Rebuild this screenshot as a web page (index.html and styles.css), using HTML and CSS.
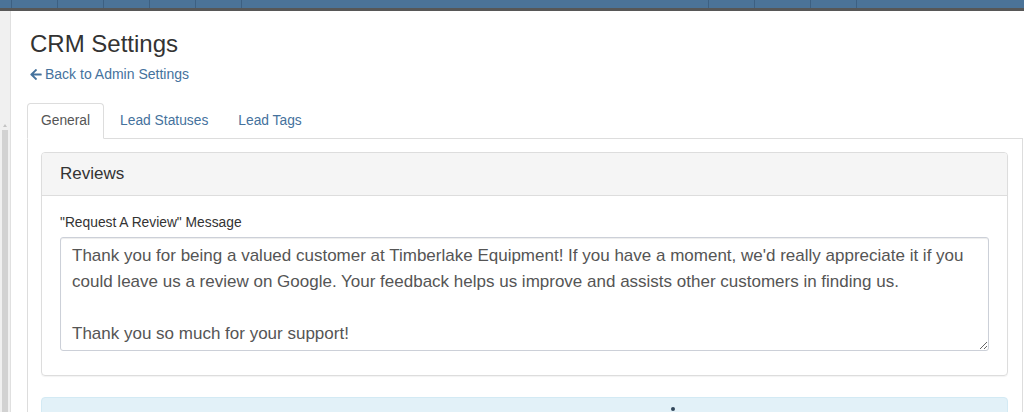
FILE: index.html
```html
<!DOCTYPE html>
<html lang="en">
<head>
    <meta charset="UTF-8">
    <title>CRM Settings</title>
    <link rel="stylesheet" href="styles.css">
</head>
<body>

<div class="topbar">
    <span class="tb-item w11"></span>
    <span class="tb-item"></span>
    <span class="tb-item"></span>
    <span class="tb-item"></span>
    <span class="tb-item"></span>
    <span class="tb-item"></span>
    <span class="tb-fill"></span>
    <span class="tb-item"></span>
    <span class="tb-item w56"></span>
    <span class="tb-item"></span>
    <span class="tb-last"></span>
</div>

<div class="layout">
    <div class="sidebar">
        <div class="sb-arrow"></div>
        <div class="sb-thumb"></div>
    </div>

    <div class="main">
        <div class="page-header">
            <h1>CRM Settings</h1>
            <a href="#" class="back-link">
                <svg class="icon-back" viewBox="0 0 448 512"><path d="M257.5 445.1l-22.2 22.2c-9.4 9.4-24.6 9.4-33.9 0L7 273c-9.4-9.4-9.4-24.6 0-33.9L201.4 44.7c9.4-9.4 24.6-9.4 33.9 0l22.2 22.2c9.5 9.5 9.3 25-.4 34.3L136.6 216H424c13.3 0 24 10.7 24 24v32c0 13.3-10.7 24-24 24H136.6l120.5 114.8c9.8 9.3 10 24.8.4 34.3z"/></svg>
                Back to Admin Settings
            </a>
        </div>

        <ul class="nav-tabs">
            <li class="active"><a href="#">General</a></li>
            <li><a href="#">Lead Statuses</a></li>
            <li><a href="#">Lead Tags</a></li>
        </ul>

        <div class="tab-content">
            <div class="panel">
                <div class="panel-heading">Reviews</div>
                <div class="panel-body">
                    <div class="form-group">
                        <label for="review-msg">"Request A Review" Message</label>
                        <textarea id="review-msg" class="form-control">Thank you for being a valued customer at Timberlake Equipment! If you have a moment, we'd really appreciate it if you could leave us a review on Google. Your feedback helps us improve and assists other customers in finding us.

Thank you so much for your support!</textarea>
                    </div>
                </div>
            </div>

            <div class="alert-info">
                <span class="alert-mark"></span>
            </div>
        </div>
    </div>
</div>

</body>
</html>
```

FILE: styles.css
```css
/* reset */
*{box-sizing: border-box;}
body{margin: 0; font-family: "Liberation Sans", Arial, Helvetica, sans-serif; font-size: 13.8px; line-height: 20px; color: #333; background: #fff; overflow: hidden;}
a{text-decoration: none; color: #45729d;}

/* top bar */
.topbar{display: flex; height: 11px; background: #4b7398; border-bottom: 3px solid #575757;}
.tb-item{width: 46px; border-right: 1px solid #3d6082;}
.tb-item.w11{width: 12px;}
.tb-item.w56{width: 56px;}
.tb-fill{flex: 1; border-right: 1px solid #3d6082;}
.tb-last{width: 167px;}

/* layout */
.layout{display: flex; height: 401px; overflow: hidden;}
.sidebar{width: 11px; background: #f0f0f0; border-right: 1px solid #e0e0e0; padding: 113px 0 0 2px;}
.sb-arrow{width: 0; height: 0; margin: 0 0 3px 1px; border-left: 2px solid transparent; border-right: 2px solid transparent; border-bottom: 3px solid #c4c4c4;}
.sb-thumb{width: 6px; height: 300px; background: #d2d2d2;}
.main{flex: 1; padding: 0 1px 0 16px;}

/* header */
.page-header{padding-left: 3px;}
.page-header h1{margin: 20px 0 7px; font-size: 24px; line-height: 1.1; font-weight: normal; color: #333;}
.back-link{display: inline-flex; align-items: center; gap: 3px; font-size: 14px;}
.icon-back{width: 12px; height: 13px; fill: #45729d;}

/* tabs */
.nav-tabs{display: flex; margin: 16px 0 0; padding: 0; list-style: none; border-bottom: 1px solid #ddd;}
.nav-tabs li{margin: 0 2px -1px 0;}
.nav-tabs li a{display: block; padding: 7px 13px; border: 1px solid transparent; border-radius: 4px 4px 0 0; color: #45729d;}
.nav-tabs li.active a{color: #555; background: #fff; border-color: #ddd #ddd transparent;}
.tab-content{border: 1px solid #ddd; border-top: 0; padding: 13px 14px 0 13px; height: 280px;}

/* panel */
.panel{border: 1px solid #ddd; border-radius: 4px; box-shadow: 0 1px 1px rgba(0,0,0,.05);}
.panel-heading{padding: 10px 18px; font-size: 17px; line-height: 22px; background: #f5f5f5; border-bottom: 1px solid #ddd; border-radius: 3px 3px 0 0;}
.panel-body{padding: 17px 18px 16px;}
.form-group{margin-bottom: 8px;}
.form-group label{display: block; margin-bottom: 4px; color: #333;}
.form-control{display: block; width: 100%; height: 114px; padding: 5px 11px 4px; font-family: "Liberation Sans", Arial, Helvetica, sans-serif; font-size: 17px; line-height: 26px; color: #555; border: 1px solid #ccd0d8; border-radius: 3px; box-shadow: inset 0 1px 1px rgba(0,0,0,.075); overflow: hidden; resize: vertical;}

/* info box */
.alert-info{position: relative; margin-top: 21px; height: 50px; background: #e2f1f8; border: 1px solid #d3eaf4; border-radius: 4px;}
.alert-mark{position: absolute; left: 629px; top: 9px; width: 4px; height: 4px; border-radius: 2px; background: #31465a;}
```
